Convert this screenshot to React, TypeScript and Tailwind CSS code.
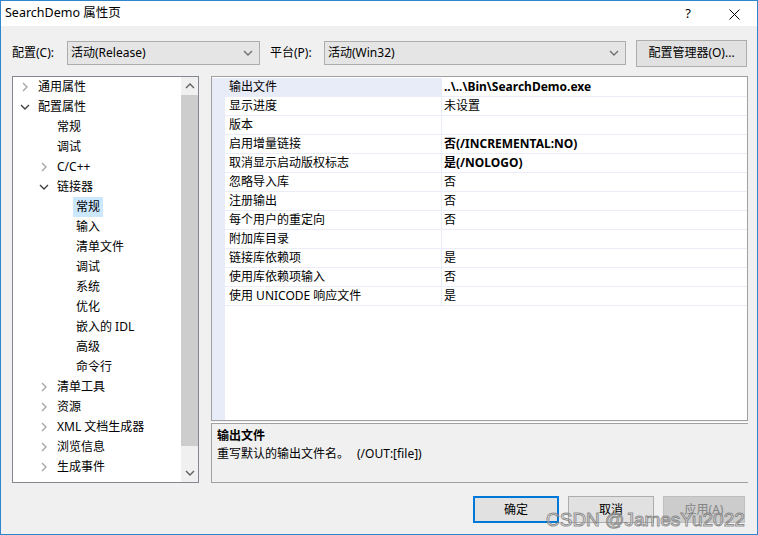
import React from "react";

const font = "font-['Noto_Sans','Noto_Sans_CJK_SC',sans-serif]";

type TreeItem = { label: string; level: number; arrow?: "closed" | "open"; selected?: boolean };

const treeItems: TreeItem[] = [
  { label: "通用属性", level: 0, arrow: "closed" },
  { label: "配置属性", level: 0, arrow: "open" },
  { label: "常规", level: 1 },
  { label: "调试", level: 1 },
  { label: "C/C++", level: 1, arrow: "closed" },
  { label: "链接器", level: 1, arrow: "open" },
  { label: "常规", level: 2, selected: true },
  { label: "输入", level: 2 },
  { label: "清单文件", level: 2 },
  { label: "调试", level: 2 },
  { label: "系统", level: 2 },
  { label: "优化", level: 2 },
  { label: "嵌入的 IDL", level: 2 },
  { label: "高级", level: 2 },
  { label: "命令行", level: 2 },
  { label: "清单工具", level: 1, arrow: "closed" },
  { label: "资源", level: 1, arrow: "closed" },
  { label: "XML 文档生成器", level: 1, arrow: "closed" },
  { label: "浏览信息", level: 1, arrow: "closed" },
  { label: "生成事件", level: 1, arrow: "closed" },
];

const props: { name: string; value: string; bold?: boolean }[] = [
  { name: "输出文件", value: "..\\..\\Bin\\SearchDemo.exe", bold: true },
  { name: "显示进度", value: "未设置" },
  { name: "版本", value: "" },
  { name: "启用增量链接", value: "否(/INCREMENTAL:NO)", bold: true },
  { name: "取消显示启动版权标志", value: "是(/NOLOGO)", bold: true },
  { name: "忽略导入库", value: "否" },
  { name: "注册输出", value: "否" },
  { name: "每个用户的重定向", value: "否" },
  { name: "附加库目录", value: "" },
  { name: "链接库依赖项", value: "是" },
  { name: "使用库依赖项输入", value: "否" },
  { name: "使用 UNICODE 响应文件", value: "是" },
];

function Chevron({ dir, color }: { dir: "right" | "down" | "up"; color: string }) {
  const pts = dir === "right" ? "3,1 7,5 3,9" : dir === "down" ? "1,3 5,7 9,3" : "1,7 5,3 9,7";
  return (
    <svg width="10" height="10" viewBox="0 0 10 10" fill="none" aria-hidden="true">
      <polyline points={pts} stroke={color} strokeWidth="1.4" />
    </svg>
  );
}

function Combo({ text, width }: { text: string; width: string }) {
  return (
    <div className={`${width} h-[24px] flex items-center justify-between pl-[3px] pr-[6px] bg-[#e5e5e5] border border-[#adadad]`}>
      <span>{text}</span>
      <Chevron dir="down" color="#707070" />
    </div>
  );
}

export default function App() {
  return (
    <div className={`${font} w-[758px] h-[535px] text-[12px] text-black bg-[#f0f0f0] border border-[#2f86cc] flex flex-col relative overflow-hidden`}>
      {/* Title bar */}
      <div className="h-[25px] bg-white flex items-center justify-between pl-[4px]">
        <span className="text-[12.5px]">SearchDemo 属性页</span>
        <div className="flex items-center">
          <span className="w-[46px] text-center text-[13px]">?</span>
          <span className="w-[46px] text-center">
            <svg width="11" height="11" viewBox="0 0 11 11" className="inline" aria-hidden="true">
              <path d="M0.5 0.5L10.5 10.5M10.5 0.5L0.5 10.5" stroke="#000" strokeWidth="1" />
            </svg>
          </span>
        </div>
      </div>

      {/* Configuration row */}
      <div className="flex items-center mt-[13px] pl-[11px] h-[28px]">
        <span className="w-[55px]">配置(C):</span>
        <Combo text="活动(Release)" width="w-[193px]" />
        <span className="ml-[10px] w-[54px]">平台(P):</span>
        <Combo text="活动(Win32)" width="w-[302px]" />
        <div className="ml-[10px] w-[111px] h-[27px] flex items-center justify-center bg-[#e1e1e1] border border-[#adadad]">
          配置管理器(O)...
        </div>
      </div>

      {/* Main panes */}
      <div className="flex mt-[9px] pl-[11px] gap-[12px]">
        {/* Tree */}
        <div className="w-[187px] h-[407px] bg-white border border-[#828790] flex">
          <div className="flex-1 flex flex-col">
            {treeItems.map((it, i) => (
              <div
                key={i}
                className="h-[20px] flex items-center"
                style={{ paddingLeft: 7 + it.level * 19 }}
              >
                <span className="w-[12px] flex items-center">
                  {it.arrow === "closed" && <Chevron dir="right" color="#a6a6a6" />}
                  {it.arrow === "open" && <Chevron dir="down" color="#404040" />}
                </span>
                <span
                  className={`ml-[3px] h-[20px] flex items-center px-[3px] -mx-[3px] ${it.selected ? "bg-[#cce8ff]" : ""}`}
                >
                  {it.label}
                </span>
              </div>
            ))}
          </div>
          <div className="w-[17px] bg-[#f0f0f0] flex flex-col">
            <div className="h-[18px] flex items-center justify-center">
              <Chevron dir="up" color="#606060" />
            </div>
            <div className="h-[351px] bg-[#cdcdcd]" />
            <div className="flex-1" />
            <div className="h-[18px] flex items-center justify-center">
              <Chevron dir="down" color="#606060" />
            </div>
          </div>
        </div>

        {/* Property grid + description */}
        <div className="w-[537px] h-[407px] flex flex-col">
          <div className="h-[345px] bg-white border border-[#a0a0a0] flex flex-col pt-[1px]">
            {props.map((p, i) => (
              <div key={i} className="h-[19px] flex">
                <div className="w-[13px] bg-[#e8ebf8]" />
                <div
                  className={`w-[216px] flex items-center pl-[4px] border-b border-[#eaedf8] ${i === 0 ? "bg-[#e8ebf8]" : ""}`}
                >
                  {p.name}
                </div>
                <div className={`flex-1 flex items-center pl-[2px] border-l border-b border-[#eaedf8] ${p.bold ? "font-bold" : ""}`}>
                  {p.value}
                </div>
              </div>
            ))}
            <div className="flex-1 flex">
              <div className="w-[13px] bg-[#e8ebf8]" />
            </div>
          </div>
          <div className="h-[1px] bg-white mt-[1px]" />
          <div className="flex-1 border-t border-l border-b border-[#a0a0a0] pl-[5px] pt-[3px] flex flex-col">
            <span className="font-bold leading-[18px]">输出文件</span>
            <span className="leading-[18px]">
              重写默认的输出文件名。<span className="ml-[8px]">(/OUT:[file])</span>
            </span>
          </div>
        </div>
      </div>

      {/* Buttons */}
      <div className="flex justify-end pr-[12px] mt-[13px]">
        <div className="w-[86px] h-[27px] flex items-center justify-center bg-[#e1e1e1] border-2 border-[#0078d7]">确定</div>
        <div className="ml-[9px] w-[86px] h-[27px] flex items-center justify-center bg-[#e1e1e1] border border-[#adadad]">取消</div>
        <div className="ml-[9px] w-[82px] h-[27px] flex items-center justify-center bg-[#cccccc] border border-[#bfbfbf] text-[#838383]">应用(A)</div>
      </div>

      {/* Watermark */}
      <div className="absolute left-[545px] top-[505px] text-[19px] font-['Liberation_Sans',sans-serif] text-white/50 [-webkit-text-stroke:1px_rgba(110,110,110,0.75)] pointer-events-none whitespace-nowrap">
        CSDN @JamesYu2022
      </div>
    </div>
  );
}
